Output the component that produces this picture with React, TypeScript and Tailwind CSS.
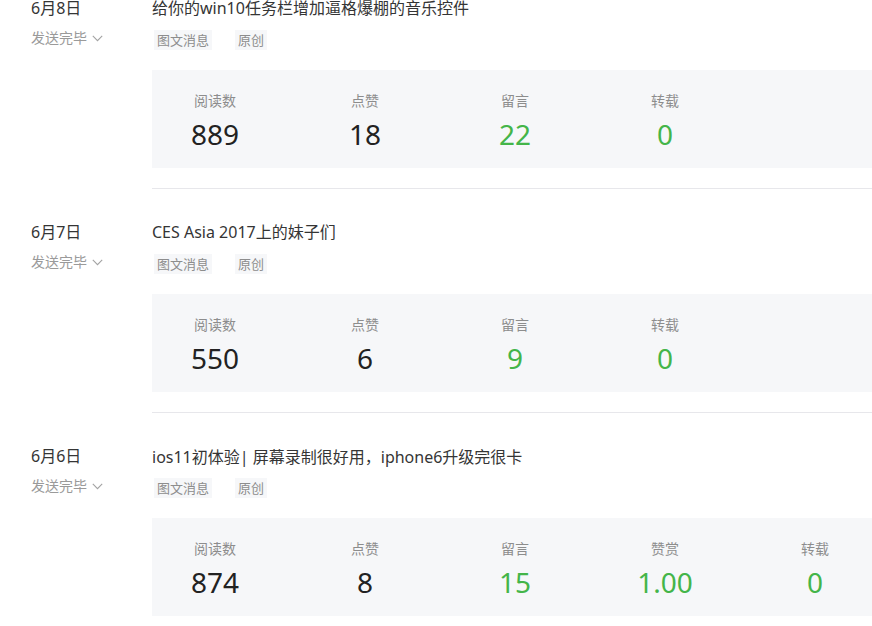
import React from "react";

type Stat = { label: string; value: string; green?: boolean };
type Item = { date: string; title: React.ReactNode; stats: Stat[] };

const items: Item[] = [
  {
    date: "6月8日",
    title: "给你的win10任务栏增加逼格爆棚的音乐控件",
    stats: [
      { label: "阅读数", value: "889" },
      { label: "点赞", value: "18" },
      { label: "留言", value: "22", green: true },
      { label: "转载", value: "0", green: true },
    ],
  },
  {
    date: "6月7日",
    title: "CES Asia 2017上的妹子们",
    stats: [
      { label: "阅读数", value: "550" },
      { label: "点赞", value: "6" },
      { label: "留言", value: "9", green: true },
      { label: "转载", value: "0", green: true },
    ],
  },
  {
    date: "6月6日",
    title: (
      <>
        ios11初体验| 屏幕录制很好用
        <span className="inline-block w-[16px]" style={{ fontFamily: '"Noto Sans CJK SC", sans-serif' }}>
          ，
        </span>
        iphone6升级完很卡
      </>
    ),
    stats: [
      { label: "阅读数", value: "874" },
      { label: "点赞", value: "8" },
      { label: "留言", value: "15", green: true },
      { label: "赞赏", value: "1.00", green: true },
      { label: "转载", value: "0", green: true },
    ],
  },
];

function Chevron() {
  return (
    <svg width="11" height="7" viewBox="0 0 11 7" className="ml-[5px] mt-[1px]">
      <polyline points="0.8,0.8 5.5,5.6 10.2,0.8" fill="none" stroke="#a3a3a3" strokeWidth="1.1" />
    </svg>
  );
}

function Row({ item }: { item: Item }) {
  return (
    <div className="flex">
      <div className="w-[152px] shrink-0 pl-[31px] pt-[31px]">
        <div className="h-[24px] leading-[24px] text-[16px] text-[#353535]">{item.date}</div>
        <div className="mt-[8px] flex h-[20px] items-center text-[14px] leading-[20px] text-[#9a9a9a]">
          <span>发送完毕</span>
          <Chevron />
        </div>
      </div>
      <div className="w-[760px] shrink-0 border-b border-[#e7e7eb] pt-[31px] pb-[20px]">
        <div className="h-[24px] leading-[24px] text-[16px] text-[#353535] whitespace-nowrap">{item.title}</div>
        <div className="mt-[10px] flex h-[20px] gap-[23px] pl-[2px]">
          <span className="bg-[#f6f7f9] px-[3px] text-[13px] leading-[20px] text-[#8d8d8d]">图文消息</span>
          <span className="bg-[#f6f7f9] px-[3px] text-[13px] leading-[20px] text-[#8d8d8d]">原创</span>
        </div>
        <div className="mt-[20px] flex h-[98px] gap-[24px] bg-[#f6f7f9] pt-[22px]">
          {item.stats.map((s, i) => (
            <div key={i} className="flex w-[126px] flex-col items-center">
              <div className="h-[18px] text-[14px] leading-[18px] text-[#8d8d8d]">{s.label}</div>
              <div
                className={
                  "mt-[6px] h-[36px] text-[28px] leading-[36px] " +
                  (s.green ? "text-[#44b549]" : "text-[#222222]")
                }
              >
                {s.value}
              </div>
            </div>
          ))}
        </div>
      </div>
    </div>
  );
}

export default function App() {
  return (
    <div
      className="h-[626px] w-[872px] overflow-hidden bg-white"
      style={{ fontFamily: '"Noto Sans", "Noto Sans CJK SC", sans-serif' }}
    >
      <div className="-mt-[35px]">
        {items.map((it, i) => (
          <Row key={i} item={it} />
        ))}
      </div>
    </div>
  );
}
